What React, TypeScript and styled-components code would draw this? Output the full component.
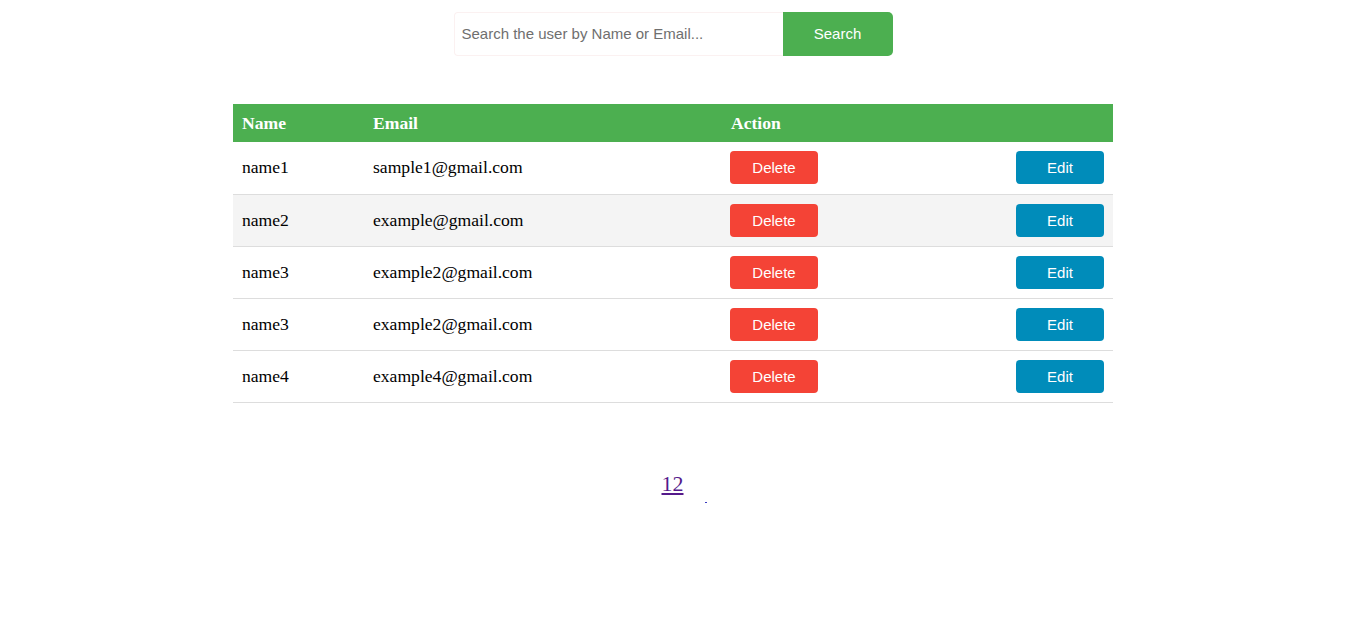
import React from "react";
import styled, { createGlobalStyle } from "styled-components";

const GlobalStyle = createGlobalStyle`
  html, body { background: #ffffff; }
  body {
    margin: 8px;
    font-family: "Liberation Serif", "Times New Roman", serif;
    color: #000;
  }
`;

const Page = styled.div`
  padding: 4px 10px 0 0;
  display: flex;
  flex-direction: column;
  align-items: center;
`;

const SearchBar = styled.form`
  display: flex;
  align-items: stretch;
  height: 44px;
`;

const SearchInput = styled.input`
  box-sizing: border-box;
  width: 329px;
  height: 44px;
  padding: 0 7px 2px;
  border: 1px solid #fbf1f1;
  border-right: none;
  border-radius: 4px 0 0 4px;
  font-family: "Liberation Sans", Arial, sans-serif;
  font-size: 15px;
  color: #333;
  outline: none;
  &::placeholder { color: #6f6f6f; }
`;

const SearchButton = styled.button`
  width: 110px;
  height: 44px;
  padding-bottom: 2px;
  border: none;
  border-radius: 0 5px 5px 0;
  background: #4caf50;
  color: #ffffff;
  font-family: "Liberation Sans", Arial, sans-serif;
  font-size: 15px;
  cursor: pointer;
`;

const Table = styled.table`
  margin-top: 48px;
  width: 880px;
  border-collapse: collapse;
  table-layout: fixed;
  font-size: 17.6px;
`;

const HeadRow = styled.tr`
  height: 38px;
  background: #4caf50;
`;

const HeadCell = styled.th`
  padding: 0 9px;
  text-align: left;
  color: #ffffff;
  font-weight: bold;
  vertical-align: middle;
`;

const Row = styled.tr<{ $alt: boolean }>`
  height: 52px;
  background: ${(p) => (p.$alt ? "#f4f4f4" : "#ffffff")};
  border-bottom: 1px solid #dddddd;
`;

const Cell = styled.td`
  padding: 0 9px;
  vertical-align: middle;
`;

const ActionCell = styled.td`
  padding: 0 9px 0 8px;
  vertical-align: middle;
`;

const Actions = styled.div`
  display: flex;
  justify-content: space-between;
  align-items: center;
`;

const ActionButton = styled.button<{ $kind: "delete" | "edit" }>`
  width: 88px;
  height: 33px;
  padding-bottom: 1px;
  border: none;
  border-radius: 4px;
  background: ${(p) => (p.$kind === "delete" ? "#f44336" : "#008cba")};
  color: #ffffff;
  font-family: "Liberation Sans", Arial, sans-serif;
  font-size: 15px;
  cursor: pointer;
`;

const Pagination = styled.div`
  margin-top: 68px;
  display: flex;
  align-items: flex-start;
  margin-left: 22px;
`;

const PageLink = styled.a`
  font-size: 22px;
  color: #551a8b;
  text-decoration: underline;
  line-height: 25px;
`;

const Dot = styled.span`
  display: block;
  width: 2px;
  height: 1px;
  background: #3a3ac0;
  margin: 31px 0 0 21px;
`;

const users = [
  { name: "name1", email: "sample1@gmail.com" },
  { name: "name2", email: "example@gmail.com" },
  { name: "name3", email: "example2@gmail.com" },
  { name: "name3", email: "example2@gmail.com" },
  { name: "name4", email: "example4@gmail.com" },
];

export default function App() {
  return (
    <>
      <GlobalStyle />
      <Page>
        <SearchBar onSubmit={(e) => e.preventDefault()}>
          <SearchInput placeholder="Search the user by Name or Email..." />
          <SearchButton type="submit">Search</SearchButton>
        </SearchBar>
        <Table>
          <colgroup>
            <col style={{ width: 131 }} />
            <col style={{ width: 358 }} />
            <col style={{ width: 391 }} />
          </colgroup>
          <thead>
            <HeadRow>
              <HeadCell>Name</HeadCell>
              <HeadCell>Email</HeadCell>
              <HeadCell>Action</HeadCell>
            </HeadRow>
          </thead>
          <tbody>
            {users.map((u, i) => (
              <Row key={i} $alt={i === 1}>
                <Cell>{u.name}</Cell>
                <Cell>{u.email}</Cell>
                <ActionCell>
                  <Actions>
                    <ActionButton $kind="delete">Delete</ActionButton>
                    <ActionButton $kind="edit">Edit</ActionButton>
                  </Actions>
                </ActionCell>
              </Row>
            ))}
          </tbody>
        </Table>
        <Pagination>
          <PageLink href="#">12</PageLink>
          <Dot />
        </Pagination>
      </Page>
    </>
  );
}
